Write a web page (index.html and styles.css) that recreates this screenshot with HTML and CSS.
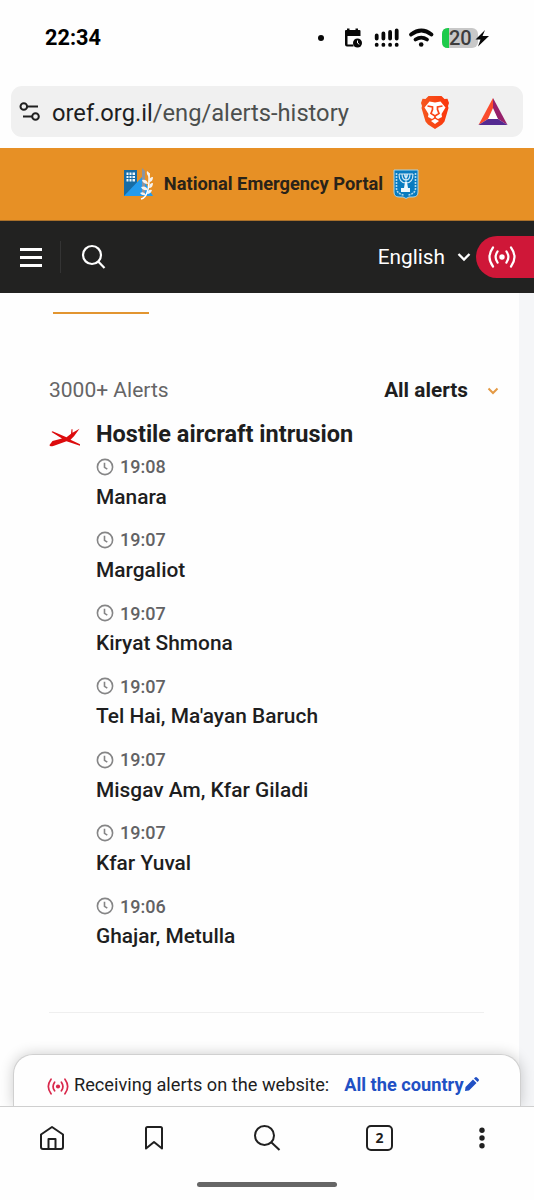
FILE: index.html
```html
<!DOCTYPE html>
<html lang="en">
<head>
  <meta charset="UTF-8" />
  <meta name="viewport" content="width=device-width, initial-scale=1.0" />
  <title>National Emergency Portal - Alerts history</title>
  <link rel="stylesheet" href="styles.css">
</head>
<body>
  <svg class="defs" width="0" height="0">
    <symbol id="clock" viewBox="0 0 18 18">
      <circle cx="9" cy="9" r="7.6" />
      <path d="M8.500 4.800v4.600l2.800 1.800" />
    </symbol>
    <symbol id="signal" viewBox="0 0 28 22">
      <circle class="dot" cx="14" cy="11" r="2.7" />
      <path d="M9.600 5.400q-4 5.600 0 11.200M18.400 5.400q4 5.600 0 11.200M5 1.500q-7 9.500 0 19M23 1.500q7 9.500 0 19" />
    </symbol>
  </svg>

  <div class="status-bar">
    <span class="time">22:34</span>
    <svg class="status-icons" width="176" height="28" viewBox="0 0 176 28">
      <circle cx="5" cy="14" r="3" />
      <path d="M30 6h1v-1.500h2.500v1.500h6v-1.500h2.500v1.500h1.500q1 0 1 1v5h-13v8.500h6v2h-6.500q-2 0-2-2v-13.500q0-1 1-1z" />
      <circle cx="41.500" cy="19" r="4.500" />
      <path class="cut" d="M41.500 16.500v2.500l1.800 1.300" />
      <path class="bars" d="M60.700 11.500v3M67.400 9.500v5M74.100 8v6.500M80.700 6.500v8" />
      <path class="bars" d="M60.700 20.700v0.200M67.400 20.700v0.200M74.100 20.700v0.200M80.700 20.700v0.200" />
      <path class="wifi" d="M95 10.500q10.500-8 20.500 0M99.500 15.500q5.800-3.800 11.500 0" />
      <circle cx="105.200" cy="20.500" r="2.300" />
      <rect class="battery" x="126" y="4" width="36" height="20" rx="6" />
      <path class="charge" d="M133 4v20h-1q-6 0-6-6v-8q0-6 6-6z" />
      <text x="133" y="21">20</text>
      <path d="M169 6l-9.500 9.500h5l-2.500 7 11-10.500h-6.500l2.500-6z" />
    </svg>
  </div>

  <div class="address-bar">
    <svg class="tune" width="22" height="22" viewBox="0 0 22 22">
      <circle cx="4.800" cy="5.500" r="3.300" /><path d="M8.500 5.500h10.500M4 15.500h9" /><circle cx="16.500" cy="15.500" r="3.300" />
    </svg>
    <span class="url">oref.org.il<span>/eng/alerts-history</span></span>
    <svg class="brave" width="30" height="34" viewBox="0 0 30 34">
      <defs>
        <linearGradient id="lion"><stop offset="0" stop-color="#f5581f" /><stop offset="1" stop-color="#fb350b" /></linearGradient>
      </defs>
      <path fill="url(#lion)" d="M8.500 1h13l3 3 3-.3 1.500 4.300-1 3 .5 2-4 13.500-2.500 3-7 4.500-7-4.500-2.500-3-4-13.500.5-2-1-3 1.500-4.300 3 .3z" />
      <path fill="#fff" d="M9.500 6.500l5.500 1 5.500-1 5 6-4 6.500 .5 3-4 2-3-2-3 2-4-2 .5-3-4-6.500z" />
      <path fill="none" stroke="#fb4516" stroke-width="1.700" d="M7.500 11l5 1v2.500l-1.500 4 4 2.500 4-2.500-1.500-4v-2.500l5-1M15 21v3" />
      <path fill="#fff" d="M11 26l4-2.200 4 2.200-4 3z" />
    </svg>
    <svg class="bat" width="30" height="28" viewBox="0 0 30 28">
      <path fill="#fa4c2d" d="M15 0v10l-5 11-9.500 6z" />
      <path fill="#96206b" d="M15 0l14.500 27-9.500-6-5-11z" />
      <path fill="#542a91" d="M.5 27l9.500-6h10l9.500 6z" />
      <path fill="#fff" d="M15 11.500l4.700 9.500h-9.400z" />
    </svg>
  </div>

  <header class="portal">
    <svg width="30" height="32" viewBox="0 0 30 32">
      <path fill="#176ca5" d="M0 2h13v26h-13z" />
      <path fill="#eef7fc" d="M2.500 4.500h8.500v9h-8.500z" />
      <path stroke="#176ca5" d="M5 4v10M8 4v10M2 7.500h9M2 10.500h9" />
      <path fill="#239bed" d="M0 28l18-19 11 19z" />
      <path fill="#8d949d" d="M18 0l3 3v24h-3z" />
      <path fill="none" stroke="#fff" stroke-width="1.500" d="M17 31q9-2 8-26" />
      <path fill="#f6f3ef" d="M25 9q-3-3-2-6 4 2 2 6zM24 16q-5 0-6-4 5-1 6 4zM24 22q-5 1-7-3 5-2 7 3zM22 27q-4 1-6-2 4-2 6 2zM25 14q0-5 4-5 0 5-4 5zM25 20q0-5 4-5 0 5-4 5zM23 26q1-5 5-4-1 4-5 4z" />
    </svg>
    <h1>National Emergency Portal</h1>
    <svg width="26" height="30" viewBox="0 0 26 30">
      <path fill="#087bc0" stroke="#a9d3e3" d="M1 1h24v22q0 5-5 5h-4l-3 1.500-3-1.500h-4q-5 0-5-5z" />
      <path fill="none" stroke="#d5eaf5" stroke-width="1.100" d="M6 5q0 9 7 9t7-9M9 5q0 6 4 6t4-6M11.500 5q0 3 1.500 4 1.500-1 1.500-4M13 5v13M6 5h14" />
      <path fill="#eef7fc" d="M12 13h2l1 6h2v4h-9v-4h3z" />
      <path fill="none" stroke="#aed9ee" stroke-width="1.600" stroke-dasharray="2 1" d="M3.500 4v16q1 5 7 6M22.500 4v16q-1 5-7 6" />
    </svg>
  </header>

  <nav class="main-nav">
    <div class="menu"><i></i><i></i><i></i></div>
    <svg class="search" width="26" height="26" viewBox="0 0 26 26"><circle cx="11" cy="11" r="9" /><path d="M17.200 17.500l6.300 6.500" /></svg>
    <div class="language">English
      <svg width="14" height="10" viewBox="0 0 14 10"><path d="M1.500 2l5.500 5.500 5.500-5.500" /></svg>
    </div>
    <div class="live"><svg class="signal" width="28" height="22"><use href="#signal" /></svg></div>
  </nav>

  <main>
    <div class="content">
      <div class="tab-line"></div>
      <div class="filter">
        <span class="count">3000+ Alerts</span>
        <span class="selected">All alerts</span>
        <svg width="12" height="8" viewBox="0 0 12 8"><path d="M1.500 1.500l4.500 4.500 4.500-4.500" /></svg>
      </div>

      <section class="alerts">
        <svg class="aircraft" width="32" height="20" viewBox="0 0 32 20">
          <path d="M0.500 17l3-4 9.500-2.500-10.500-6.500 1-.8 14 6 4.500-3.500 .5-4.500h1v3.500l7-4-5.500 7.500-3.500 3.500 9.500 4.500v1.500l-13.500-4.500-12.500 4.500q-4.500 1.500-4.500-.7z" />
        </svg>
        <div class="details">
          <h2>Hostile aircraft intrusion</h2>
          <ul>
            <li><time><svg><use href="#clock" /></svg>19:08</time><p>Manara</p></li>
            <li><time><svg><use href="#clock" /></svg>19:07</time><p>Margaliot</p></li>
            <li><time><svg><use href="#clock" /></svg>19:07</time><p>Kiryat Shmona</p></li>
            <li><time><svg><use href="#clock" /></svg>19:07</time><p>Tel Hai, Ma'ayan Baruch</p></li>
            <li><time><svg><use href="#clock" /></svg>19:07</time><p>Misgav Am, Kfar Giladi</p></li>
            <li><time><svg><use href="#clock" /></svg>19:07</time><p>Kfar Yuval</p></li>
            <li><time><svg><use href="#clock" /></svg>19:06</time><p>Ghajar, Metulla</p></li>
          </ul>
        </div>
      </section>
      <hr>
    </div>

    <div class="receiving">
      <svg class="signal" width="22" height="17"><use href="#signal" /></svg>
      <span>Receiving alerts on the website:</span>
      <b>All the country</b>
      <svg class="pencil" width="14" height="14" viewBox="0 0 14 14"><path d="M0 14l.5-4 7.500-7.500 3.500 3.500-7.500 7.500zM9 1.500l1-1q1-1 2 0l1.500 1.500q1 1 0 2l-1 1z" /></svg>
    </div>
  </main>

  <footer class="toolbar">
    <div class="buttons">
      <svg viewBox="0 0 28 28"><path d="M3 10.500l11-7.500 11 7.500v12.500q0 2-2 2h-18q-2 0-2-2zM10.500 25v-10h7v10" /></svg>
      <svg viewBox="0 0 28 28"><path d="M6 4.500q0-1.500 1.500-1.500h13q1.500 0 1.500 1.500v20l-8-6.500-8 6.500z" /></svg>
      <svg viewBox="0 0 28 28"><circle cx="11.500" cy="11.500" r="9.500" /><path d="M18.500 18.500l8 7.500" /></svg>
      <div class="tabs">2</div>
      <svg viewBox="0 0 28 28"><g class="dots"><circle cx="14" cy="6.300" r="2.700" /><circle cx="14" cy="14" r="2.700" /><circle cx="14" cy="21.700" r="2.700" /></g></svg>
    </div>
    <div class="handle"></div>
  </footer>
</body>
</html>
```
FILE: styles.css
```css
* {
  box-sizing: border-box;
}
body {
  margin: 0;
  height: 1200px;
  display: flex;
  flex-direction: column;
  overflow: hidden;
  background: #fefefe;
  color: #1e1e1f;
  font-family: Roboto, sans-serif;
}
svg {
  display: block;
  flex: none;
}
h1, h2, p, ul {
  margin: 0;
  padding: 0;
}
.defs {
  position: absolute;
}

/* phone status */
.status-bar {
  height: 86px;
  padding: 24px 42px 0 45px;
  display: flex;
  justify-content: space-between;
}
.time {
  color: #000;
  font-size: 21.7px;
  font-weight: 700;
  line-height: 28px;
}
.status-icons {
  fill: #080808;
}
.status-icons text {
  fill: #3d3d3d;
  font-size: 20px;
  font-weight: 500;
}
.status-icons .cut {
  fill: none;
  stroke: #fff;
}
.status-icons .bars, .status-icons .wifi {
  fill: none;
  stroke: #080808;
  stroke-width: 3.8;
  stroke-linecap: round;
}
.status-icons .battery {
  fill: #c8c8c8;
}
.status-icons .charge {
  fill: #1ecb4b;
}

.address-bar {
  height: 51px;
  margin: 0 11px 11px;
  padding: 0 15px 0 8px;
  display: flex;
  align-items: center;
  border-radius: 11px;
  background: #f0f0f0;
}
.tune {
  fill: none;
  stroke: #202020;
  stroke-width: 2;
}
.url {
  margin: 2px 0 0 11px;
  font-size: 23.7px;
  white-space: nowrap;
}
.url span {
  color: #4c4f4e;
}
.brave {
  margin-left: auto;
}
.bat {
  margin-left: 28px;
}

/* site header */
.portal {
  height: 73px;
  padding: 0 115px 1px 124px;
  display: flex;
  align-items: center;
  justify-content: space-between;
  border-bottom: 1px solid #aa702a;
  background: #e79025;
}
.portal h1 {
  color: #292319;
  font-size: 18.25px;
  font-weight: 700;
  white-space: nowrap;
}
.main-nav {
  height: 72px;
  padding-left: 20px;
  display: flex;
  align-items: center;
  background: #222221;
}
.menu {
  width: 41px;
  height: 32px;
  padding-top: 7px;
  border-right: 1px solid #343434;
}
.menu i {
  display: block;
  width: 22px;
  height: 2.5px;
  margin-bottom: 5.5px;
  background: #fff;
}
.search {
  margin-left: 20px;
  fill: none;
  stroke: #fff;
  stroke-width: 2.2;
}
.language {
  margin-left: auto;
  display: flex;
  align-items: center;
  gap: 12px;
  color: #fff;
  font-size: 20.8px;
}
.language path {
  fill: none;
  stroke: #fff;
  stroke-width: 2.3;
}
.live {
  width: 58px;
  height: 42px;
  margin-left: 5px;
  padding: 10px 0 0 12px;
  border-radius: 21px 0 0 21px;
  background: #cf1738;
}
.signal {
  fill: none;
  stroke: currentColor;
  stroke-width: 2.2;
  stroke-linecap: round;
  color: #d9294c;
}
.live .signal {
  color: #fff;
}
.dot {
  fill: currentColor;
  stroke: none;
}

main {
  flex: 1;
  min-height: 0;
  display: flex;
  flex-direction: column;
  background: linear-gradient(90deg, #fefefe 519px, #f5f6f8 519px);
}
.content {
  flex: 1;
  min-height: 0;
  padding: 19px 35px 0 49px;
}
.tab-line {
  width: 96px;
  height: 2px;
  margin-left: 4px;
  background: #e29530;
}
.filter {
  width: 450px;
  height: 30px;
  margin-top: 61px;
  display: flex;
  align-items: center;
}
.count {
  color: #656566;
  font-size: 21px;
}
.selected {
  margin-left: auto;
  font-size: 20.8px;
  font-weight: 700;
}
.filter svg {
  margin: 1px 0 0 19px;
  fill: none;
  stroke: #e49a45;
  stroke-width: 2;
}
.alerts {
  margin-top: 14px;
  display: flex;
  gap: 15px;
}
.aircraft {
  margin-top: 9px;
  fill: #dc0b0d;
}
.details h2 {
  height: 30px;
  font-size: 23.5px;
  font-weight: 700;
  line-height: 30px;
}
.details ul {
  list-style: none;
}
.details li {
  height: 73.25px;
  padding-top: 6.5px;
}
.details time {
  display: flex;
  align-items: center;
  gap: 6px;
  height: 22px;
  color: #626264;
  font-size: 18px;
  font-weight: 500;
}
.details time svg {
  width: 18px;
  height: 18px;
  fill: none;
  stroke: #858586;
  stroke-width: 1.6;
}
.details p {
  margin-top: 6px;
  font-size: 20.9px;
  font-weight: 500;
  line-height: 26px;
}
hr {
  width: 435px;
  margin: 50px 0 0;
  border: 0;
  border-top: 1px solid #efefef;
}
.receiving {
  height: 52px;
  margin: 0 13px;
  padding: 10px 0 0 33px;
  display: flex;
  align-items: flex-start;
  border: 1px solid #d0d0d0;
  border-bottom: 0;
  border-radius: 20px 20px 0 0;
  background: #fefefe;
  box-shadow: 0 0 14px #0003;
  font-size: 18.2px;
  line-height: 40px;
}
.receiving .signal {
  margin-top: 13px;
}
.receiving span {
  margin-left: 5px;
}
.receiving b {
  margin-left: 15px;
  color: #2150c4;
}
.receiving .pencil {
  margin: 12px 0 0 1px;
  fill: #2150c4;
}

.toolbar {
  height: 94px;
  border-top: 1px solid #cfcfcf;
  background: #fefefe;
  z-index: 1;
}
.buttons {
  height: 62px;
  padding: 0 38px;
  display: grid;
  grid-template-columns: 102px 113px 113px 102px 28px;
  align-items: center;
}
.buttons svg {
  width: 28px;
  height: 28px;
  fill: none;
  stroke: #202020;
  stroke-width: 2;
  stroke-linejoin: round;
}
.buttons .dots {
  fill: #202020;
  stroke: none;
}
.tabs {
  width: 27px;
  height: 26px;
  border: 2px solid #202020;
  border-radius: 5px;
  font: 700 14px/22px "Noto Sans", sans-serif;
  text-align: center;
}
.handle {
  width: 140px;
  height: 5px;
  margin: 13px auto 0;
  border-radius: 3px;
  background: #666;
}
```
